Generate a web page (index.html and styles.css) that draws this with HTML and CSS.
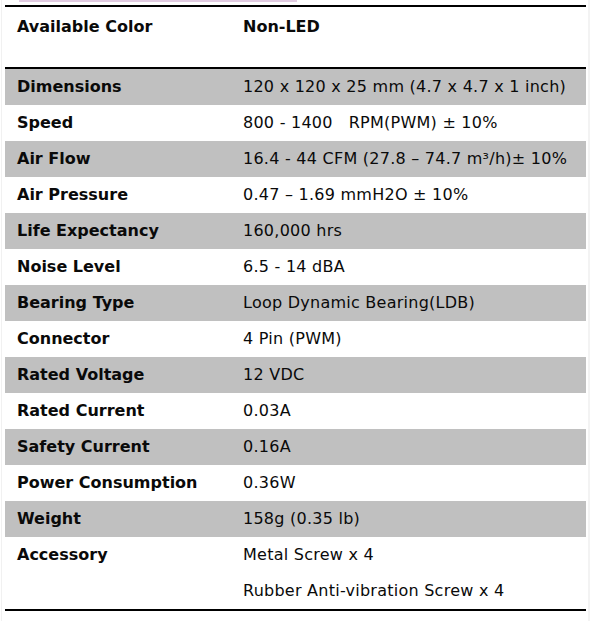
FILE: index.html
```html
<!DOCTYPE html>
<html>
<head>
<meta charset="utf-8">
<link rel="stylesheet" href="styles.css">
</head>
<body>
<div class="page">
  <div class="strip"></div>
  <table class="spec">
    <tr class="head-row">
      <th>Available Color</th>
      <td class="bold">Non-LED</td>
    </tr>
    <tr class="g"><th>Dimensions</th><td>120 x 120 x 25 mm (4.7 x 4.7 x 1 inch)</td></tr>
    <tr><th>Speed</th><td>800 - 1400&nbsp;&nbsp; RPM(PWM) ± 10%</td></tr>
    <tr class="g"><th>Air Flow</th><td>16.4 - 44 CFM (27.8 – 74.7 m³/h)± 10%</td></tr>
    <tr><th>Air Pressure</th><td>0.47 – 1.69 mmH2O ± 10%</td></tr>
    <tr class="g"><th>Life Expectancy</th><td>160,000 hrs</td></tr>
    <tr><th>Noise Level</th><td>6.5 - 14 dBA</td></tr>
    <tr class="g"><th>Bearing Type</th><td>Loop Dynamic Bearing(LDB)</td></tr>
    <tr><th>Connector</th><td>4 Pin (PWM)</td></tr>
    <tr class="g"><th>Rated Voltage</th><td>12 VDC</td></tr>
    <tr><th>Rated Current</th><td>0.03A</td></tr>
    <tr class="g"><th>Safety Current</th><td>0.16A</td></tr>
    <tr><th>Power Consumption</th><td>0.36W</td></tr>
    <tr class="g"><th>Weight</th><td>158g (0.35 lb)</td></tr>
    <tr class="last"><th>Accessory</th><td>Metal Screw x 4<br>Rubber Anti-vibration Screw x 4</td></tr>
  </table>
</div>
</body>
</html>
```
FILE: styles.css
```css
html, body {
  margin: 0;
  padding: 0;
  background: #ffffff;
}
.page {
  width: 589px;
  height: 621px;
  margin-left: 1px;
  border-left: 1px solid #f1f1f1;
  border-right: 2px solid #f3f3f3;
  box-sizing: border-box;
  padding-left: 3px;
  font-family: "DejaVu Sans", Verdana, sans-serif;
  font-size: 16px;
  color: #0a0a0a;
}
.strip {
  height: 2px;
  width: 278px;
  margin-left: 14px;
  background: #e2cce2;
  margin-bottom: 3px;
}
.spec {
  width: 581px;
  border-collapse: collapse;
  border-top: 2px solid #000;
  border-bottom: 2px solid #000;
}
.spec th, .spec td {
  padding: 0;
  line-height: 36px;
  vertical-align: top;
  text-align: left;
  white-space: nowrap;
}
.spec th {
  width: 226px;
  padding-left: 12px;
  font-weight: bold;
}
.spec td {
  font-weight: normal;
  letter-spacing: 0.25px;
}
.spec td.bold {
  font-weight: bold;
  letter-spacing: 0;
}
.spec tr {
  height: 36px;
}
.spec tr.head-row {
  height: 62px;
  border-bottom: 2px solid #000;
}
.spec tr.head-row th, .spec tr.head-row td {
  padding-top: 2px;
}
.spec tr.g {
  background: #c0c0c0;
}
.spec tr.last {
  height: 72px;
}
```
